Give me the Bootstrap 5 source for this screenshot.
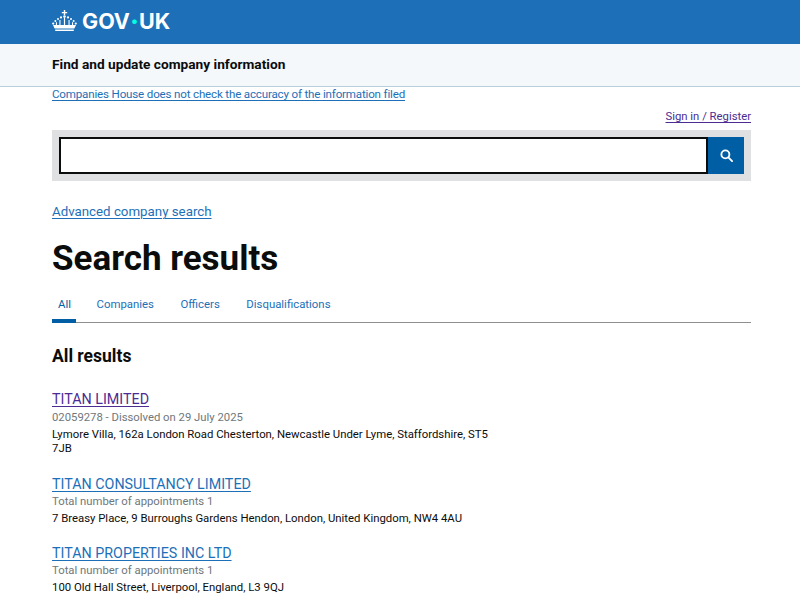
<!DOCTYPE html>
<html lang="en"><head><meta charset="utf-8"><title>Search results</title>
<link href="https://cdn.jsdelivr.net/npm/bootstrap@5.3.0/dist/css/bootstrap.min.css" rel="stylesheet">
<style>
body{font-family:Roboto,"Noto Sans",sans-serif;color:#0b0c0c;font-size:12px;overflow:hidden;background:#fff}
a{color:#1d70b8;text-underline-offset:2px;text-decoration-thickness:1px}
.wrap{margin-left:52px;width:699px}
.gov{background:#1d70b8;height:44px}
.logo{color:#fff;font-family:"Inter",sans-serif;font-weight:700;font-size:21.5px;line-height:1;gap:5px;height:43px}
.logo svg{margin-bottom:2px}
.logo b{color:#00ffe0;font-weight:700;font-size:27px;line-height:0;vertical-align:-2px}
.svc{background:#f4f8fb;height:43px;border-bottom:1px solid #b8cfdc;padding-bottom:1px}
.svc span{font-weight:700;font-size:13.7px}
.note{font-size:11.6px;line-height:15px;letter-spacing:-.18px}
.sign{font-size:11.3px;line-height:16px;margin-top:7px}
.sign a,.first{color:#4c2c92}
.sbar{background:#dee0e2;padding:7px;margin-top:5px;height:51px}
.sbar .field{flex:1;border:2px solid #0b0c0c;background:#fff;height:37px}
.sbar .go{width:36px;height:37px;background:#005ea5;border-radius:0;border:0;padding:0}
.adv{font-size:13.3px;line-height:20px;margin-top:21px}
h1{font-size:35px;font-weight:700;line-height:44px;margin:15px 0 0}
.tabs{border-bottom:1px solid #8f8f8f;height:32px;margin-top:10px;gap:26.5px}
.tabs a{text-decoration:none;font-size:11.4px;line-height:16px;padding-top:5px;height:32px;color:#1d70b8}
.tabs a.on{padding:5px 5px 0 6px;margin-right:-6px;color:#005ea5;border-bottom:4px solid #005ea5}
h2{font-size:17.5px;font-weight:700;line-height:22px;margin:22px 0 0}
.res{width:440px;margin-top:23px}
.res+.res{margin-top:19px}
.res h3{font-size:14.3px;font-weight:400;line-height:18px;margin:0}
.res .meta{color:#6f777b;font-size:11.3px;line-height:17px;margin-top:.5px}
.res+.res+.res{margin-top:18px}
.res .addr{font-size:11.35px;line-height:14.5px;margin-top:1px}
</style></head><body>
<header class="gov"><div class="wrap"><div class="logo d-flex align-items-center">
<svg width="25" height="22" viewBox="0 0 25 22" fill="#fff" aria-hidden="true"><path d="M11.8 0h1.400v2h2v1.300h-2V5h-1.400V3.300h-2V2h2z"/><circle cx="12.500" cy="6.600" r="1.300"/><circle cx="9" cy="7.400" r="1.100"/><circle cx="16" cy="7.400" r="1.100"/><circle cx="6" cy="9" r="1"/><circle cx="19" cy="9" r="1"/><circle cx="3.400" cy="11" r="1"/><circle cx="21.600" cy="11" r="1"/><circle cx="1.200" cy="13.600" r="1.100"/><circle cx="23.800" cy="13.600" r="1.100"/><path d="M1 15h23l-1.600 3.600H2.600zM3.200 19.400h18.600V21H3.200z"/><path d="M11.900 8h1.200v7h-1.200zM7.400 10h1.100v5H7.400zM16.500 10h1.100v5h-1.100zM3.900 12.200H5V15H3.900zM20 12.200h1.100V15H20z"/></svg>
<span>GOV<b>·</b>UK</span></div></div></header>
<div class="svc d-flex align-items-center"><div class="wrap"><span>Find and update company information</span></div></div>
<main class="wrap">
<div class="note"><a href="#">Companies House does not check the accuracy of the information filed</a></div>
<div class="sign text-end"><a href="#">Sign in / Register</a></div>
<form class="sbar d-flex"><div class="field"></div><button type="button" class="go btn d-flex align-items-center justify-content-center" aria-label="Search"><svg width="13" height="13" viewBox="0 0 14 14" fill="none" stroke="#fff" stroke-width="2"><circle cx="5.800" cy="5.800" r="4.300"/><path d="M9 9l4 4" stroke-linecap="round"/></svg></button></form>
<div class="adv"><a href="#">Advanced company search</a></div>
<h1>Search results</h1>
<nav class="tabs d-flex"><a class="on" href="#">All</a><a href="#">Companies</a><a href="#">Officers</a><a href="#">Disqualifications</a></nav>
<h2>All results</h2>
<div class="res"><h3><a class="first" href="#">TITAN LIMITED</a></h3><div class="meta">02059278 - Dissolved on 29 July 2025</div><div class="addr">Lymore Villa, 162a London Road Chesterton, Newcastle Under Lyme, Staffordshire, ST5 7JB</div></div>
<div class="res"><h3><a href="#">TITAN CONSULTANCY LIMITED</a></h3><div class="meta">Total number of appointments 1</div><div class="addr">7 Breasy Place, 9 Burroughs Gardens Hendon, London, United Kingdom, NW4 4AU</div></div>
<div class="res"><h3><a href="#">TITAN PROPERTIES INC LTD</a></h3><div class="meta">Total number of appointments 1</div><div class="addr">100 Old Hall Street, Liverpool, England, L3 9QJ</div></div>
</main>
<script src="https://cdn.jsdelivr.net/npm/bootstrap@5.3.0/dist/js/bootstrap.bundle.min.js"></script>
</body></html>
